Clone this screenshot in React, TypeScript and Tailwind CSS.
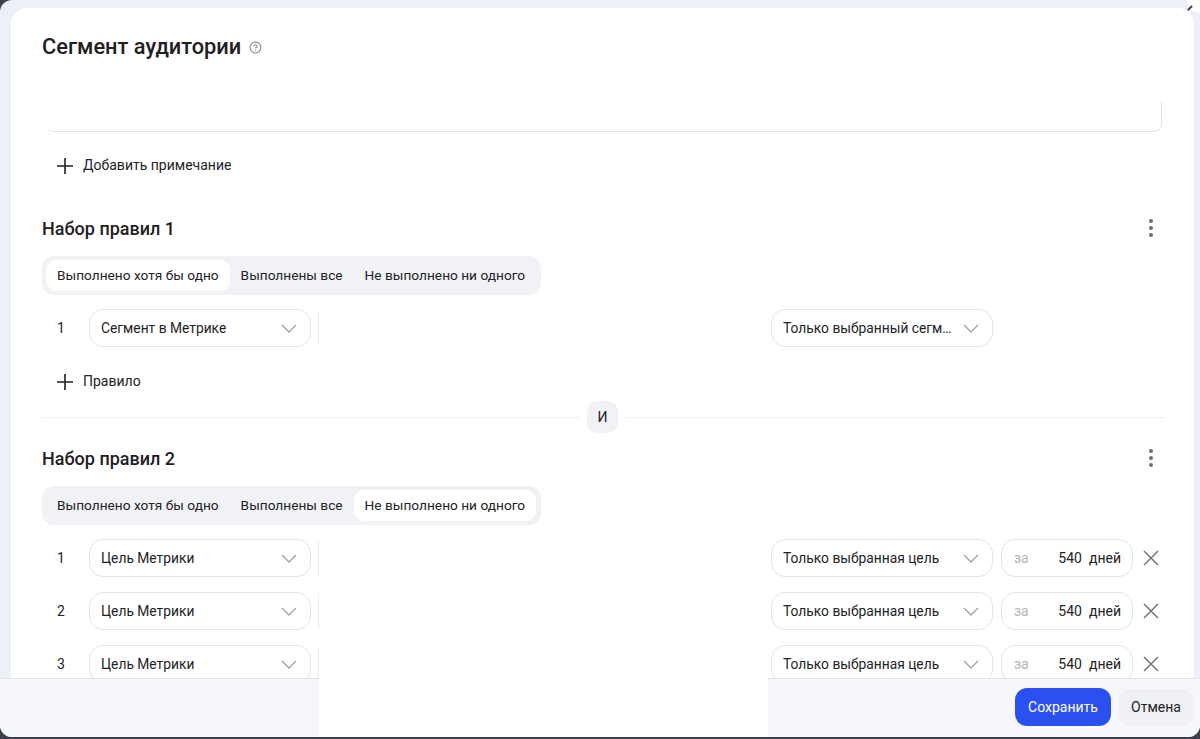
import { CircleHelp } from "lucide-react";

const Chevron = () => (
  <svg width="16" height="9" viewBox="0 0 16 9" fill="none" className="shrink-0">
    <path d="M1 1l7 7 7-7" stroke="#a3a3a3" strokeWidth="1.4" />
  </svg>
);

const Plus = () => (
  <svg width="18" height="18" viewBox="0 0 18 18" fill="none" className="shrink-0">
    <path d="M9 1v16M1 9h16" stroke="#1f2023" strokeWidth="1.6" />
  </svg>
);

const Cross = () => (
  <svg width="16" height="16" viewBox="0 0 16 16" fill="none" className="shrink-0">
    <path d="M1 1l14 14M15 1L1 15" stroke="#74767a" strokeWidth="1.5" />
  </svg>
);

const Dots = () => (
  <div className="flex w-4 flex-col items-center gap-[3.5px]">
    <span className="h-[3.5px] w-[3.5px] rounded-full bg-[#6f7074]" />
    <span className="h-[3.5px] w-[3.5px] rounded-full bg-[#6f7074]" />
    <span className="h-[3.5px] w-[3.5px] rounded-full bg-[#6f7074]" />
  </div>
);

const Select = ({ label }: { label: string }) => (
  <div className="flex h-[38px] w-[222px] shrink-0 items-center justify-between gap-2 rounded-[14px] border border-[#e4e5e8] bg-white pl-[11px] pr-[13px] text-[13.8px]">
    <span className="truncate">{label}</span>
    <Chevron />
  </div>
);

const tabs = ["Выполнено хотя бы одно", "Выполнены все", "Не выполнено ни одного"];

const Tabs = ({ active }: { active: number }) => (
  <div className="flex h-[39px] w-[499px] items-center rounded-[12px] bg-[#f1f2f5] p-1 text-[13.7px]">
    {tabs.map((t, i) => (
      <div
        key={t}
        className={
          i === active
            ? "flex h-[31px] items-center whitespace-nowrap rounded-[10px] bg-white px-[11px]"
            : "flex h-[31px] items-center whitespace-nowrap px-[11px]"
        }
      >
        {t}
      </div>
    ))}
  </div>
);

const RuleHeader = ({ title }: { title: string }) => (
  <div className="flex h-6 items-center justify-between pr-[6px]">
    <h3 className="text-[18px] font-medium text-[#1f2023]">{title}</h3>
    <Dots />
  </div>
);

const Row = ({ n, label, right, days }: { n: number; label: string; right: string; days?: boolean }) => (
  <div className="flex items-center">
    <span className="w-[47px] shrink-0 pl-[15px]">{n}</span>
    <Select label={label} />
    <span className="ml-[7px] h-[36px] w-px shrink-0 bg-[#eeeff1]" />
    <span className="w-[452px] shrink-0" />
    <Select label={right} />
    {days && (
      <>
        <div className="ml-2 flex h-[38px] w-[132px] shrink-0 items-center rounded-[14px] border border-[#e4e5e8] pl-3 pr-[11px]">
          <span className="text-[#b3b4b7]">за</span>
          <span className="ml-auto">540</span>
          <span className="ml-[7px]">дней</span>
        </div>
        <span className="ml-[10px]">
          <Cross />
        </span>
      </>
    )}
  </div>
);

const AddButton = ({ label }: { label: string }) => (
  <div className="flex items-center gap-[9px] pl-[14px]">
    <Plus />
    <span>{label}</span>
  </div>
);

export default function App() {
  return (
    <div className="relative h-[739px] w-[1200px] overflow-hidden bg-[#3b3f4a] font-['Roboto',sans-serif] text-[14px] text-[#222326]">
      <div className="flex h-[737px] flex-col overflow-hidden rounded-[12px] bg-[#eef0f8]">
        <div className="ml-[11px] mr-[6px] mt-2 min-h-0 flex-1 overflow-hidden rounded-t-[16px] bg-white pl-[31px] pr-[29px]">
          <div className="flex items-center gap-2 pt-[26px]">
            <h2 className="text-[21.8px] font-medium leading-[26px] text-[#1f2023]">Сегмент аудитории</h2>
            <CircleHelp size={13} color="#8a8b8e" />
          </div>
          <div className="ml-[5px] mr-[3px] mt-[42px] h-[30px] rounded-b-[8px] border-b border-r border-[#e2e3e6]" />
          <div className="mt-[23px]">
            <AddButton label="Добавить примечание" />
          </div>

          <div className="mt-[40px]">
            <RuleHeader title="Набор правил 1" />
          </div>
          <div className="mt-[16px]">
            <Tabs active={0} />
          </div>
          <div className="mt-[14px]">
            <Row n={1} label="Сегмент в Метрике" right="Только выбранный сегмент" />
          </div>
          <div className="mt-[24px]">
            <AddButton label="Правило" />
          </div>

          <div className="mt-[9px] flex items-center">
            <span className="h-px w-[537px] bg-[#eeeff1]" />
            <span className="mx-[8px] flex h-8 w-[31px] items-center justify-center rounded-[10px] bg-[#f1f2f5]">И</span>
            <span className="h-px flex-1 bg-[#eeeff1]" />
          </div>

          <div className="mt-[13px]">
            <RuleHeader title="Набор правил 2" />
          </div>
          <div className="mt-[16px]">
            <Tabs active={2} />
          </div>
          <div className="mt-[14px] flex flex-col gap-[15px]">
            <Row n={1} label="Цель Метрики" right="Только выбранная цель" days />
            <Row n={2} label="Цель Метрики" right="Только выбранная цель" days />
            <Row n={3} label="Цель Метрики" right="Только выбранная цель" days />
          </div>
        </div>

        <div className="flex h-[59px] shrink-0">
          <div className="w-[319px] border-t border-[#e2e3e6] bg-[#f5f7fb]" />
          <div className="w-[449px] bg-white" />
          <div className="flex flex-1 items-center justify-end gap-2 border-t border-[#e2e3e6] bg-[#f5f7fb] pb-[2px] pr-[7px]">
            <button className="h-[38px] w-[96px] rounded-[12px] bg-[#2b50f0] text-white">Сохранить</button>
            <button className="h-[37px] w-[74px] rounded-[12px] bg-[#eff0f4]">Отмена</button>
          </div>
        </div>
      </div>
      {/* close button peeking out of the top right corner */}
      <div className="absolute -right-[13px] -top-[13px] flex h-[26px] w-[26px] items-end justify-start rounded-full bg-white">
        <span className="mb-[2px] ml-[2px] h-[6px] w-[1.5px] rotate-45 bg-[#44464b]" />
      </div>
    </div>
  );
}
